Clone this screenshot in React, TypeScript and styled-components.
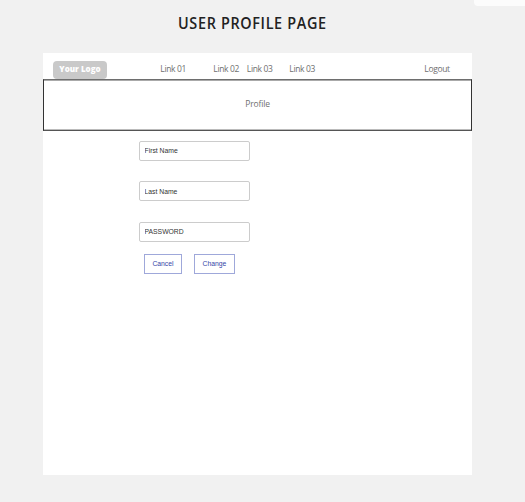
import React from "react";
import styled, { createGlobalStyle } from "styled-components";

const GlobalStyle = createGlobalStyle`
  *, *::before, *::after { box-sizing: border-box; }
  body { margin: 0; background: #f1f1f1; }
`;

const Page = styled.div`
  position: relative;
  height: 502px;
  overflow: hidden;
  background: #f1f1f1;
  font-family: "Open Sans", "Noto Sans", sans-serif;
`;

const CornerTab = styled.div`
  position: absolute;
  top: 0;
  right: 0;
  width: 51px;
  height: 6px;
  background: #fcfcfc;
  border-bottom-left-radius: 4px;
`;

const Title = styled.h1`
  margin: 0 0 0 178px;
  padding-top: 12px;
  height: 53px;
  font-size: 15.5px;
  line-height: 23px;
  font-weight: 640;
  letter-spacing: 0.7px;
  color: #222;
  white-space: nowrap;
  transform: scaleX(0.93);
  transform-origin: left;
`;

const Panel = styled.main`
  width: 429px;
  height: 422px;
  margin-left: 43px;
  background: #fff;
`;

const Nav = styled.nav`
  display: flex;
  height: 26px;
  padding: 8px 0 0 10px;
`;

const Logo = styled.div`
  width: 54px;
  height: 18px;
  border-radius: 4px;
  background: #c9c9c9;
  color: #fff;
  font-size: 8px;
  font-weight: 800;
  line-height: 16px;
  text-align: center;
  white-space: nowrap;
`;

const NavLink = styled.a<{ $gap: number; $width: number }>`
  width: ${(p) => p.$width}px;
  margin-left: ${(p) => p.$gap}px;
  color: #707070;
  font-size: 8.5px;
  letter-spacing: -0.35px;
  line-height: 16px;
  white-space: nowrap;
`;

const Banner = styled.section`
  display: flex;
  align-items: center;
  justify-content: center;
  height: 52px;
  padding-bottom: 2px;
  border: 1px solid #333;
  border-top-color: #6e6e6e;
  border-bottom-color: #555;
  box-shadow: inset 0 1px #aaa, inset 0 -1px #bbb;
  color: #707070;
  font-size: 8.5px;
  letter-spacing: -0.15px;
  line-height: 12px;
`;

const Form = styled.form`
  display: flex;
  flex-direction: column;
  gap: 20.6px;
  padding: 9.8px 0 0 96px;
`;

const Field = styled.input`
  display: block;
  width: 111px;
  height: 20px;
  padding: 0 4.5px;
  border: 1px solid #ccc;
  border-radius: 2px;
  outline: none;
  background: #fff;
  color: #333;
  font: 6.8px/18px "Liberation Sans", Arial, sans-serif;
`;

const Actions = styled.div`
  display: flex;
  gap: 12px;
  margin: -8.6px 0 0 5px;
`;

const Button = styled.button<{ $width: number }>`
  width: ${(p) => p.$width}px;
  height: 20px;
  padding: 0;
  border: 1px solid #9fa8da;
  background: #fff;
  color: #3646a8;
  font: 6.8px/18px "Liberation Sans", Arial, sans-serif;
`;

const links = [
  { label: "Link 01", gap: 53.3, width: 26 },
  { label: "Link 02", gap: 27, width: 26 },
  { label: "Link 03", gap: 7.5, width: 26 },
  { label: "Link 03", gap: 16.5, width: 26 },
  { label: "Logout", gap: 109, width: 25 },
];

export default function App() {
  return (
    <>
      <GlobalStyle />
      <Page>
        <CornerTab />
        <Title>USER PROFILE PAGE</Title>
        <Panel>
          <Nav>
            <Logo>Your Logo</Logo>
            {links.map((l, i) => (
              <NavLink key={i} $gap={l.gap} $width={l.width}>{l.label}</NavLink>
            ))}
          </Nav>
          <Banner>Profile</Banner>
          <Form>
            <Field defaultValue="First Name" />
            <Field defaultValue="Last Name" />
            <Field defaultValue="PASSWORD" />
            <Actions>
              <Button type="button" $width={38}>Cancel</Button>
              <Button type="button" $width={41}>Change</Button>
            </Actions>
          </Form>
        </Panel>
      </Page>
    </>
  );
}
